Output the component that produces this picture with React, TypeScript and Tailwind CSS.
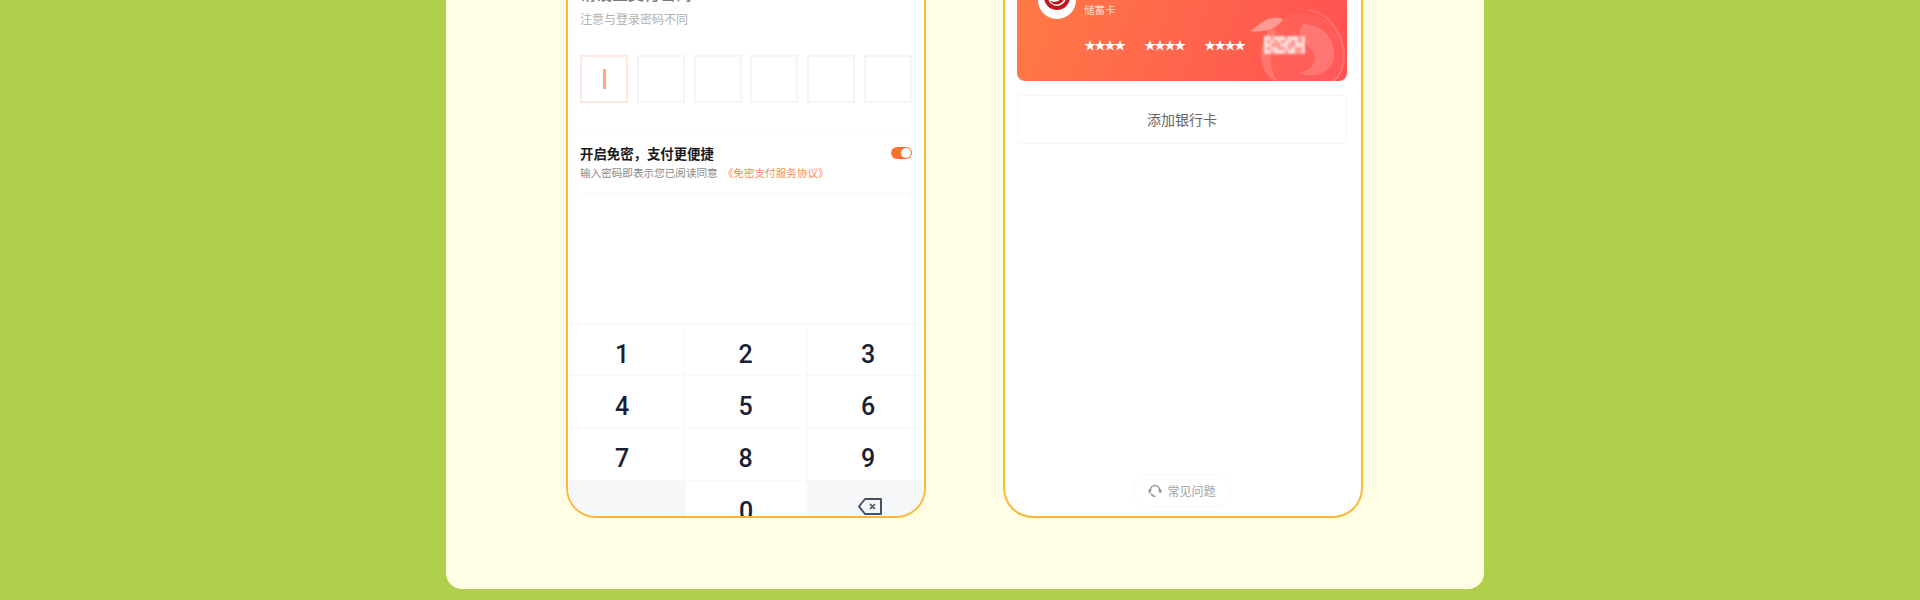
const FONT = "font-['Noto_Sans_CJK_SC','Noto_Sans',sans-serif]";

const KEYS = ["1", "2", "3", "4", "5", "6", "7", "8", "9"];
const KEY_COLUMN = ["border-r pr-[8px]", "border-r pr-[1px]", "pl-[4px]"];

// 模糊的卡号末四位
const MOSAIC = [
  "110111011101",
  "101010110101",
  "110001100111",
  "101100101001",
  "110111011001",
];

const CardMark = () => (
  <svg viewBox="0 0 115 90" className="absolute right-[-9px] bottom-[-9px] h-[90px] w-[115px]">
    <circle cx="62" cy="55" r="42" fill="#ffffff" fillOpacity="0.05" />
    <path d="M9 31 C18 27 24 14 42 19 C36 30 22 33 9 31Z" fill="#ff9a90" />
    <path d="M30 28 C14 45 18 72 36 82 C28 66 26 44 36 32Z" fill="#ffffff" fillOpacity="0.14" />
    <path
      d="M62 24 C85 24 98 45 92 62 C86 76 70 78 58 73 C68 72 78 62 72 52 C66 42 52 38 62 24Z"
      fill="#ffffff"
      fillOpacity="0.16"
    />
    <path d="M68 10 C92 14 106 40 102 64 C100 74 96 80 90 82" fill="none" stroke="#ffffff" strokeOpacity="0.14" strokeWidth="2" />
  </svg>
);

const Logo = () => (
  <svg viewBox="0 0 38 38" className="h-[38px] w-[38px]">
    <circle cx="19" cy="19" r="19" fill="#ffffff" />
    <circle cx="19" cy="16" r="11" fill="none" stroke="#c0161c" strokeWidth="4" />
    <path d="M12 20 C16 26 26 24 27 15 C23 20 17 22 12 20Z" fill="#c0161c" />
    <path d="M16 10 C22 12 24 17 20 21 L25 18 L24 10Z" fill="#c0161c" />
  </svg>
);

const Mosaic = () => (
  <div className="flex h-[18px] w-[41px] flex-col blur-[1px]">
    {MOSAIC.map((row, i) => (
      <div key={i} className="flex flex-1">
        {row.split("").map((c, j) => (
          <div key={j} className={c === "1" ? "flex-1 bg-[#ffdcd9]" : "flex-1 bg-[#ff9a96]"} />
        ))}
      </div>
    ))}
  </div>
);

const Stars = () => <span className="w-[40px] text-[12px] leading-none tracking-[-2px] whitespace-nowrap text-white">★★★★</span>;

const PasswordPhone = () => (
  <div className="flex h-[518px] w-[360px] flex-col overflow-hidden rounded-b-[30px] border-x-2 border-b-2 border-[#fdb83c] bg-white">
    <div className="px-[12px]">
      <p className="mt-[-15px] text-[16px] leading-[16px] font-medium text-[#777]">请设置支付密码</p>
      <p className="mt-[10px] text-[12px] leading-[16px] text-[#b0b0b0]">注意与登录密码不同</p>
      <div className="mt-[28px] flex justify-between">
        <div className="flex h-[48px] w-[48px] items-center justify-center border-2 border-[#ffe8dd]">
          <div className="h-[20px] w-[3px] bg-[#ffab80]" />
        </div>
        {[1, 2, 3, 4, 5].map((i) => (
          <div key={i} className="h-[48px] w-[48px] border-2 border-[#f5f5f5]" />
        ))}
      </div>
      <div className="mt-[29px] flex h-[61px] items-start justify-between border-y border-[#f9f9f9] pt-[11px]">
        <div>
          <p className="text-[13.4px] leading-[18px] font-bold text-[#1a1a1a]">开启免密{"\uFF0C"}支付更便捷</p>
          <p className="mt-[3px] text-[10.6px] leading-[16px] text-[#8a8a8a]">
            输入密码即表示您已阅读同意<span className="ml-[5px] text-[#ff8a5c]">《免密支付服务协议》</span>
          </p>
        </div>
        <div className="mt-[3px] flex h-[12px] w-[21px] items-center justify-end rounded-full bg-[#ff6f2e] pr-[1px]">
          <div className="h-[10px] w-[10px] rounded-full bg-white" />
        </div>
      </div>
    </div>
    <div className="mt-[130px] grid flex-1 grid-cols-[117px_123px_1fr] grid-rows-[52px_52px_53px_1fr] border-t border-[#f8f8f8] font-['Roboto',sans-serif] text-[25px] font-medium text-[#1b1f33]">
      {KEYS.map((k, i) => (
        <div key={k} className={`flex items-center justify-center border-b border-[#f8f8f8] pt-[10px] ${KEY_COLUMN[i % 3]}`}>
          {k}
        </div>
      ))}
      <div className="bg-[#f6f7f9]" />
      <div className="flex h-[52px] items-center justify-center border-x border-[#f8f8f8] bg-white pt-[10px] pr-[1px]">0</div>
      <div className="flex justify-center bg-[#f6f7f9] pt-[17px] pl-[8px]">
        <svg viewBox="0 0 24 17" className="h-[17px] w-[24px]" fill="none" stroke="#4b5064" strokeWidth="2">
          <path d="M7 1 H23 V16 H7 L1 8.5Z" strokeLinejoin="round" />
          <path d="M12 6 L17 11 M17 6 L12 11" strokeWidth="1.6" />
        </svg>
      </div>
    </div>
  </div>
);

const CardPhone = () => (
  <div className="flex h-[518px] w-[360px] flex-col items-center overflow-hidden rounded-b-[30px] border-x-2 border-b-2 border-[#fdb83c] bg-white pr-[14px] pl-[12px]">
    <div className="relative h-[81px] w-full shrink-0 overflow-hidden rounded-b-[8px] bg-linear-[110deg] from-[#ff7a45] to-[#ff5052]">
      <CardMark />
      <div className="relative flex h-[20px] pl-[21px]">
        <div className="mt-[-19px] shrink-0">
          <Logo />
        </div>
        <p className="mt-[2px] ml-[8px] text-[10.5px] leading-[16px] text-[#ffdcd4]">储蓄卡</p>
      </div>
      <div className="relative mt-[16px] flex items-center gap-[20px] pl-[67px]">
        <Stars />
        <Stars />
        <Stars />
        <Mosaic />
      </div>
    </div>
    <div className="mt-[14px] flex h-[49px] w-full shrink-0 items-center justify-center rounded-[3px] border border-[#f6f6f6] text-[14px] text-[#666]">
      添加银行卡
    </div>
    <div className="mt-[330px] flex h-[33px] w-[98px] shrink-0 items-center justify-center gap-[5px] rounded-full border border-[#f8f8f8] text-[12px] text-[#a3a3a3]">
      <svg viewBox="0 0 14 14" className="h-[14px] w-[14px]" fill="none" stroke="#999" strokeWidth="1.6">
        <path d="M2.5 7 V6 A4.5 4.5 0 0 1 11.5 6 V7" />
        <path d="M3 9.5 A5 5 0 0 0 7.5 12.5" />
        <rect x="0.5" y="5" width="2.5" height="4" rx="1" fill="#999" stroke="none" />
        <rect x="11" y="5" width="2.5" height="4" rx="1" fill="#999" stroke="none" />
      </svg>
      常见问题
    </div>
  </div>
);

export default function App() {
  return (
    <div className={`flex h-[600px] w-[1920px] justify-center overflow-hidden bg-[#b0d04c] pl-[10px] ${FONT}`}>
      <div className="flex h-[589px] w-[1038px] gap-[77px] rounded-b-[16px] bg-[#fffde3] pl-[120px]">
        <PasswordPhone />
        <CardPhone />
      </div>
    </div>
  );
}
